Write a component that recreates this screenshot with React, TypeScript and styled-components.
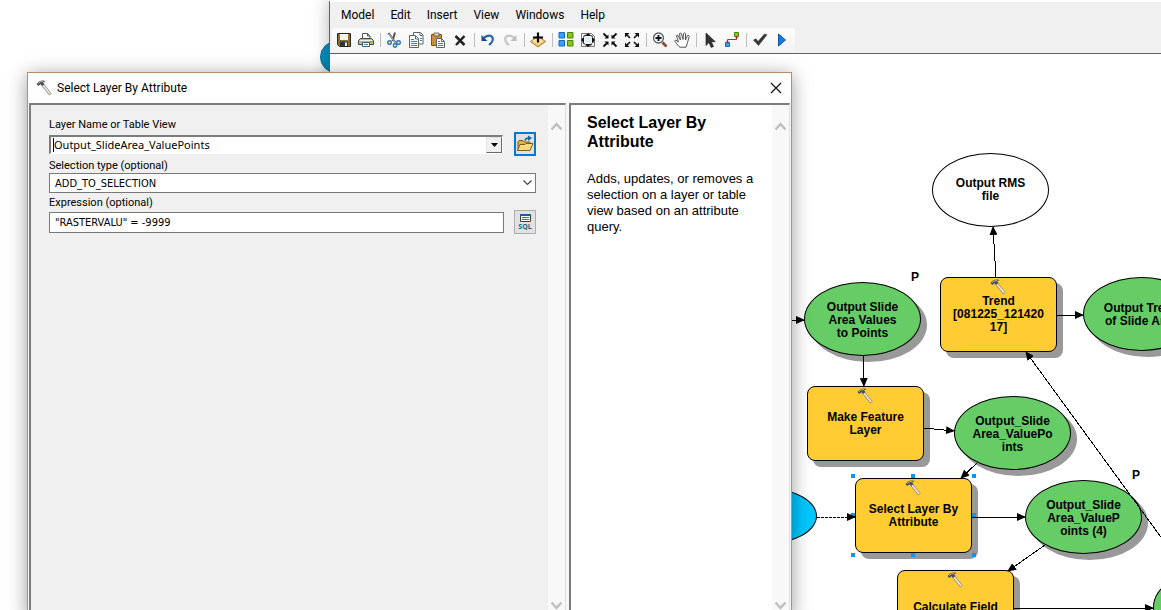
import React from "react";
import styled, { createGlobalStyle } from "styled-components";

const GlobalStyle = createGlobalStyle`
  *, *::before, *::after { box-sizing: border-box; }
  html, body { margin: 0; padding: 0; }
  body { background: #fff; color: #000; font-family: "Open Sans", "Noto Sans", sans-serif; }
  button, input, select { font: inherit; color: inherit; margin: 0; border-radius: 0; outline: none; }
`;

const arial = `"Liberation Sans", Arial, sans-serif`;
const ui = `Roboto, "Open Sans", sans-serif`;
const value = `"Noto Sans", "Open Sans", sans-serif`;
const form = `"DejaVu Sans Condensed", "Noto Sans", sans-serif`;

/* ---------- desktop and windows ---------- */

const Desktop = styled.div`
  position: relative;
  height: 100vh;
  overflow: hidden;
  background: #fff;
`;

const Bubble = styled.div`
  position: absolute;
  left: 320px;
  top: 41px;
  width: 32px;
  height: 32px;
  border-radius: 50%;
  background: #0093c4;
  border: 1px solid #08759c;
`;

const ModelWindow = styled.section`
  position: absolute;
  inset: 0 0 0 329px;
  display: flex;
  flex-direction: column;
  background: #f0f0f0;
  border-left: 1px solid #606060;
  border-top: 2px solid #fff;
  box-shadow: 0 0 16px rgba(0, 0, 0, 0.3);
`;

const MenuBar = styled.nav`
  display: flex;
  align-items: center;
  height: 26px;
  padding-left: 3px;
`;

const MenuItem = styled.button`
  padding: 0 8px;
  border: 0;
  background: none;
  font-family: ${ui};
  font-size: 12px;
  line-height: 18px;
`;

const ToolBar = styled.div`
  display: flex;
  align-items: center;
  align-self: flex-start;
  height: 24px;
  margin-left: 2px;
  padding: 0 2px 0 1px;
  border-radius: 3px;
  background: linear-gradient(#fcfcfc, #f3f3f3);
`;

const ToolButton = styled.button`
  display: flex;
  align-items: center;
  justify-content: center;
  width: 22px;
  height: 22px;
  padding: 0;
  border: 0;
  background: none;
`;

const Separator = styled.span`
  width: 1px;
  height: 14px;
  margin: 0 2px 0 3px;
  background: #bdbdbd;
`;

const Canvas = styled.div`
  position: relative;
  flex: 1;
  margin-top: 1px;
  overflow: hidden;
  border-top: 1px solid #606060;
  background: #fff;
`;

/* ---------- diagram ---------- */

type NodeKind = "tool" | "data" | "plain" | "input";

const fills: Record<NodeKind, string> = {
  tool: "#ffcc33",
  data: "#66cc66",
  plain: "#ffffff",
  input: "#00c8ff",
};

const heights: Record<NodeKind, number> = { tool: 75, data: 74, plain: 74, input: 56 };

const NodeBox = styled.div<{ $x: number; $y: number; $kind: NodeKind }>`
  position: absolute;
  left: ${(p) => p.$x}px;
  top: ${(p) => p.$y}px;
  display: flex;
  align-items: center;
  justify-content: center;
  width: ${(p) => (p.$kind === "input" ? 100 : 117)}px;
  height: ${(p) => heights[p.$kind]}px;
  padding-top: ${(p) => (p.$kind === "data" ? 2 : 0)}px;
  border: 1px solid #000;
  border-radius: ${(p) => (p.$kind === "tool" ? "8px" : "50%")};
  background: ${(p) => fills[p.$kind]};
  box-shadow: ${(p) => (p.$kind === "tool" || p.$kind === "data" ? "6px 6px 0 #999" : "none")};
  font: bold 12px/13px ${arial};
  text-align: center;
  white-space: pre;
`;

const NodeHammer = styled.span`
  position: absolute;
  left: 49px;
  top: 1px;
  height: 16px;
`;

const Param = styled.span<{ $x: number; $y: number }>`
  position: absolute;
  left: ${(p) => p.$x}px;
  top: ${(p) => p.$y}px;
  font: bold 12px/14px ${arial};
`;

const Handle = styled.span<{ $x: number; $y: number }>`
  position: absolute;
  left: ${(p) => p.$x}px;
  top: ${(p) => p.$y}px;
  width: 4px;
  height: 4px;
  background: #0a96f5;
`;

const Links = styled.svg`
  position: absolute;
  inset: 0;
  width: 100%;
  height: 100%;
  pointer-events: none;
`;

/* ---------- dialog ---------- */

const Dialog = styled.section`
  position: absolute;
  left: 27px;
  top: 72px;
  bottom: -8px;
  width: 765px;
  max-width: calc(100vw - 27px);
  display: flex;
  flex-direction: column;
  border: 1px solid #b98c63;
  background: #fff;
  box-shadow: 0 3px 18px rgba(0, 0, 0, 0.4);
`;

const TitleBar = styled.header`
  display: flex;
  align-items: center;
  height: 30px;
  padding: 0 8px;
`;

const Title = styled.h1`
  flex: 1;
  margin: 0 0 0 5px;
  font: 400 12px/16px ${ui};
`;

const CloseButton = styled.button`
  display: flex;
  align-items: center;
  justify-content: center;
  width: 14px;
  height: 14px;
  padding: 0;
  border: 0;
  background: none;
`;

const Panels = styled.div`
  flex: 1;
  display: flex;
  gap: 3px;
  min-height: 0;
  padding: 0 1px;
  background: #f6f6f6;
`;

const Panel = styled.div<{ $tone: "form" | "help" }>`
  display: flex;
  min-width: 0;
  flex: ${(p) => (p.$tone === "form" ? "1" : "0 0 221px")};
  background: ${(p) => (p.$tone === "form" ? "#f0f0f0" : "#ffffff")};
  border-top: 2px solid #7c7c7c;
  border-left: 2px solid #7c7c7c;
  border-right: 1px solid #dedede;
`;

const ScrollColumn = styled.div`
  display: flex;
  flex-direction: column;
  justify-content: space-between;
  align-items: center;
  width: 17px;
  padding: 17px 0 7px;
  background: #f8f8f8;
`;

const ScrollButton = styled.button`
  display: flex;
  padding: 0;
  border: 0;
  background: none;
`;

const Form = styled.form`
  flex: 1;
  display: flex;
  flex-direction: column;
  gap: 4px;
  min-width: 0;
  padding: 14px 12px 0 18px;
  font-family: ${form};
  font-size: 11px;
`;

const Field = styled.div`
  display: flex;
  flex-direction: column;
  gap: 1px;
`;

const Label = styled.label`
  font: 11px/12px ${ui};
`;

const Row = styled.div`
  display: flex;
  align-items: center;
  gap: 10px;
`;

const Combo = styled.div`
  flex: 1;
  display: flex;
  height: 19px;
  margin-right: 1px;
  border: 1px solid #fff;
  border-top: 2px solid #7c7c7c;
  border-left: 2px solid #7c7c7c;
  background: #fff;
`;

const Caret = styled.span`
  width: 1px;
  height: 14px;
  margin: 1px 0 0 2px;
  background: #000;
`;

const ComboInput = styled.input`
  flex: 1;
  min-width: 0;
  padding: 0;
  border: 0;
  background: none;
  font-family: ${value};
  font-size: 11px;
  line-height: 16px;
`;

const ComboArrow = styled.button`
  display: flex;
  align-items: center;
  justify-content: center;
  width: 16px;
  padding: 0;
  border: 1px solid #e6e6e6;
  border-right: 1px solid #696969;
  border-bottom: 1px solid #696969;
  background: #f0f0f0;
`;

const SelectWrap = styled.div`
  display: grid;
  align-items: center;
  height: 20px;
  > * { grid-area: 1 / 1; }
  > svg { justify-self: end; margin-right: 4px; pointer-events: none; }
`;

const Select = styled.select`
  appearance: none;
  width: 100%;
  height: 20px;
  padding: 0 20px 0 5px;
  border: 1px solid #7a7a7a;
  background: #fff;
  font-size: 11px;
`;

const TextInput = styled.input`
  flex: 1;
  min-width: 0;
  height: 21px;
  padding: 0 5px;
  border: 1px solid #7a7a7a;
  background: #fff;
  font-size: 11px;
`;

const SideButton = styled.button<{ $active?: boolean }>`
  display: flex;
  flex-direction: column;
  align-items: center;
  justify-content: center;
  gap: 1px;
  width: 22px;
  height: 24px;
  padding: 0;
  border: ${(p) => (p.$active ? "2px solid #0078d7" : "1px solid #adadad")};
  background: #e1e1e1;
`;

const SqlText = styled.span`
  color: #10688f;
  font: bold 7px/8px ${value};
`;

const Help = styled.article`
  flex: 1;
  min-width: 0;
  padding: 8px 16px 0;
  font-family: ${arial};
`;

const HelpTitle = styled.h2`
  margin: 0 0 20px;
  font: bold 16px/19px ${arial};
`;

const HelpText = styled.p`
  margin: 0;
  font-size: 13px;
  line-height: 16px;
`;

/* ---------- icons ---------- */

const Icon = ({ children }: { children: React.ReactNode }) => (
  <svg width="16" height="16" viewBox="0 0 16 16" fill="none" aria-hidden="true">
    {children}
  </svg>
);

const Hammer = () => (
  <Icon>
    <path d="M6.5 4.5 L14.5 14.5" stroke="#8b857b" strokeWidth="3" />
    <path d="M6.5 4.5 L14.2 14" stroke="#efe6d8" strokeWidth="1.8" />
    <path d="M0.5 4 L3 1.5 Q6 -0.2 10 1 L7 2.2 L8.5 4 L6 6 L4.6 4.2 L2.2 6 Z" fill="#4b4f52" />
    <path d="M2 3.6 L4 2 L7 1.4" stroke="#aeb4b8" strokeWidth="1" />
  </Icon>
);

const toolIcons: Record<string, React.ReactNode> = {
  Save: (
    <>
      <path d="M1.5 1.5h13v13h-11l-2-2z" fill="#85742f" stroke="#2c2a20" />
      <path d="M4 2h8v6H4z" fill="#f2f2ee" />
      <path d="M4 9.5h8V14H4z" fill="#33363a" />
      <path d="M9 10.5h2V14H9z" fill="#e9e9e9" />
    </>
  ),
  Print: (
    <>
      <path d="M4.5 7V1.5h5l2.5 2.5V7" fill="#fff" stroke="#555" />
      <path d="M9.5 1.5v2.5H12" stroke="#555" />
      <path d="M0.5 8.5l2-2h11l2 2v4h-15z" fill="#b9b79a" stroke="#4c4c46" />
      <path d="M2 8.5h12" stroke="#eee" />
      <path d="M12 10h2" stroke="#65c400" strokeWidth="2" />
      <path d="M4.5 10.5h7v4h-7z" fill="#fff" stroke="#555" />
      <path d="M6 12.5h4" stroke="#3b83bd" />
    </>
  ),
  Cut: (
    <>
      <path d="M2.5 1L9.5 10.5M9 0.5L6.5 9" stroke="#555" strokeWidth="2" />
      <path d="M3 2L9 10" stroke="#ddd" strokeWidth="0.8" />
      <circle cx="3.5" cy="10.5" r="1.8" stroke="#2475b0" strokeWidth="1.4" />
      <circle cx="12.5" cy="10.5" r="1.8" stroke="#2475b0" strokeWidth="1.4" />
      <circle cx="9" cy="13.5" r="1.7" stroke="#2475b0" strokeWidth="1.4" />
    </>
  ),
  Copy: (
    <>
      <path d="M5.5 0.5h7l2.5 2.5v9h-9.5z" fill="#fff" stroke="#59656e" />
      <path d="M12 1v2.5h2.5" stroke="#59656e" />
      <path d="M1.5 3.5h6l3 3v9h-9z" fill="#fff" stroke="#59656e" />
      <path d="M7.5 4v3h3" stroke="#59656e" />
      <path d="M3 7.5h3M3 9.5h6M3 11.5h6M3 13.5h6M12 6.5h2M12 8.5h2" stroke="#2b84c6" />
    </>
  ),
  Paste: (
    <>
      <path d="M1.5 2.5h10v11h-10z" fill="#d28c35" stroke="#8a4f15" />
      <path d="M4 1h5v3H4z" fill="#d9d9d9" stroke="#555" strokeWidth="0.8" />
      <path d="M6.5 6.5h5l3 3v6h-8z" fill="#fff" stroke="#59656e" />
      <path d="M11.5 7v2.5H14" stroke="#59656e" />
      <path d="M8 11.5h5M8 13.5h5M8 9.5h2" stroke="#2b84c6" />
    </>
  ),
  Delete: <path d="M3.5 4L12.5 13M12.5 4L4 13" stroke="#222" strokeWidth="2.5" />,
  Undo: (
    <>
      <path d="M4 5.5Q10 2 12.5 5.5Q14 9 9 13" stroke="#2567a4" strokeWidth="2.2" />
      <path d="M1.5 3v6h6z" fill="#174c83" />
    </>
  ),
  Redo: (
    <>
      <path d="M12 5.5Q6 2 3.5 5.5Q2 9 7 13" stroke="#c6c6c6" strokeWidth="2.2" />
      <path d="M14.5 3v6h-6z" fill="#bcbcbc" />
    </>
  ),
  "Add data": (
    <>
      <path d="M8 4L15.5 9.5 8 15 0.5 9.5z" fill="#f2c46c" stroke="#a87832" />
      <path d="M2.5 9L8 5l5.5 4L8 12.5z" fill="#ffe2a0" />
      <path d="M8 0.5v10M3 5.5h10" stroke="#000" strokeWidth="2.2" />
    </>
  ),
  "Auto layout": (
    <>
      <path d="M1 0.5h5.500v5.500H1zM1 8.5h5.500V14H1z" fill="#3aa0ff" stroke="#1768b5" />
      <path d="M9.5 0.5H15V6H9.5zM9.5 8.5H15V14H9.5z" fill="#8fc31f" stroke="#4e830d" />
    </>
  ),
  "Full extent": (
    <>
      <path d="M1.5 1.5h10l3 3v10h-13z" fill="#fff" stroke="#777" />
      <circle cx="8" cy="8" r="5.5" fill="#eef5f8" stroke="#555" strokeWidth="1.4" strokeDasharray="3 1" />
      <path d="M8 1l3 3H5zM8 15l3-3H5zM1 8l3-3v6zM15 8l-3-3v6z" fill="#111" />
      <path d="M5.5 5.5h5v5h-5z" fill="#dcebf2" />
    </>
  ),
  "Fixed zoom in": (
    <>
      <path d="M1.5 1.5L5 5M14.5 1.5L11 5M1.5 14.5L5 11M14.5 14.5L11 11" stroke="#111" strokeWidth="1.8" />
      <path d="M2.5 6.5h4v-4zM13.5 6.5h-4v-4zM2.5 9.5h4v4zM13.5 9.5h-4v4z" fill="#111" />
    </>
  ),
  "Fixed zoom out": (
    <>
      <path d="M3 3l3 3M13 3l-3 3M3 13l3-3M13 13l-3-3" stroke="#111" strokeWidth="1.6" />
      <path d="M1 1h4.5L1 5.5zM15 1h-4.5l4.5 4.5zM1 15h4.5L1 10.5zM15 15h-4.5l4.5-4.5z" fill="#111" />
    </>
  ),
  Zoom: (
    <>
      <path d="M10.5 10.5L14.5 14.5" stroke="#8b4b35" strokeWidth="2.8" />
      <circle cx="6.5" cy="6" r="5" fill="#f1f7fa" stroke="#5b6165" strokeWidth="1.3" />
      <path d="M3.5 6h6M6.5 3v6" stroke="#111" strokeWidth="1.8" />
    </>
  ),
  Pan: (
    <path
      d="M5 14.5L1 9.5Q0.5 8 2 8.2L4.5 10 2.5 4Q2.6 2.5 4 3.5L6.5 8 5.5 2Q6 0.3 7.3 1.5L9 7.5 9.5 1.5Q10.5 0 11.5 1.5L11.5 8 13.5 3.5Q15 3 15.2 4.5L13.5 10.5 12 15.2H6z"
      fill="#fff"
      stroke="#555"
    />
  ),
  Select: <path d="M4 1v12.5l3-3 2.2 5 2.3-1-2.2-4.8h4z" fill="#333" stroke="#111" strokeWidth="0.6" />,
  Connect: (
    <>
      <path d="M3.5 10V7.5h9V5" stroke="#555" />
      <path d="M1.5 10.5h4v4h-4z" fill="#3aa0ff" stroke="#1768b5" />
      <path d="M10.5 0.5h4v4h-4z" fill="#8fc31f" stroke="#4e830d" />
      <path d="M3.5 8.5v2M12.5 4.5v2" stroke="#e00000" strokeWidth="1.6" />
    </>
  ),
  Validate: <path d="M1.5 8L4 6.8 6 9.5 12.5 2 15 2.8 6.5 13.5z" fill="#333" stroke="#444" strokeWidth="0.6" />,
  Run: <path d="M4.5 2L11.5 8l-7 6z" fill="#1879dc" stroke="#0b55ad" />,
};

const toolGroups = [
  ["Save", "Print"],
  ["Cut", "Copy", "Paste", "Delete"],
  ["Undo", "Redo"],
  ["Add data"],
  ["Auto layout", "Full extent", "Fixed zoom in", "Fixed zoom out"],
  ["Zoom", "Pan"],
  ["Select", "Connect"],
  ["Validate", "Run"],
];

const Folder = () => (
  <svg width="18" height="18" viewBox="0 0 18 18" fill="none" aria-hidden="true">
    <path d="M2 15.5V6.5l1-1h4l1.5 1.5H14v3" fill="#d9b24a" stroke="#7d5c17" />
    <path d="M1.5 15.5L4 9.5h5l1-1h7l-3 7z" fill="#f6d97c" stroke="#7d5c17" />
    <path d="M9 5.5Q9.5 3 13 3" stroke="#14639e" strokeWidth="1.5" />
    <path d="M12 0.5l4 2.5-4 3z" fill="#14639e" />
  </svg>
);

const SqlIcon = () => (
  <svg width="11" height="8" viewBox="0 0 11 8" fill="none" aria-hidden="true">
    <path d="M0.5 0.5h10v7h-10z" fill="#fff" stroke="#333f48" />
    <path d="M0 1h11" stroke="#1b5f98" strokeWidth="2" />
    <path d="M2 3.5h7M2 5.5h7" stroke="#1d7cc9" />
  </svg>
);

const Chevron = ({ up }: { up?: boolean }) => (
  <svg width="11" height="9" viewBox="0 0 11 9" fill="none" aria-hidden="true">
    <path d={up ? "M0.5 7.5L5.5 2l5 5.5" : "M0.5 1.5L5.5 7l5-5.5"} stroke="#bfbfbf" strokeWidth="2.5" />
  </svg>
);

const Scroll = () => (
  <ScrollColumn>
    <ScrollButton type="button" aria-label="Scroll up"><Chevron up /></ScrollButton>
    <ScrollButton type="button" aria-label="Scroll down"><Chevron /></ScrollButton>
  </ScrollColumn>
);

/* ---------- diagram data, in canvas coordinates ---------- */

const nodes: { x: number; y: number; kind: NodeKind; text: string }[] = [
  { x: 602, y: 99, kind: "plain", text: "Output RMS\nfile" },
  { x: 474, y: 228, kind: "data", text: "Output Slide\nArea Values\nto Points" },
  { x: 610, y: 223, kind: "tool", text: "Trend\n[081225_121420\n17]" },
  { x: 753, y: 223, kind: "data", text: "Output Trend\nof Slide Area" },
  { x: 477, y: 332, kind: "tool", text: "Make Feature\nLayer" },
  { x: 624, y: 342, kind: "data", text: "Output_Slide\nArea_ValuePo\nints" },
  { x: 387, y: 434, kind: "input", text: "" },
  { x: 525, y: 424, kind: "tool", text: "Select Layer By\nAttribute" },
  { x: 695, y: 426, kind: "data", text: "Output_Slide\nArea_ValueP\noints (4)" },
  { x: 567, y: 516, kind: "tool", text: "Calculate Field" },
  { x: 823, y: 516, kind: "data", text: "" },
];

const links: [number, number, number, number][] = [
  [440, 266, 474, 266],
  [533, 302, 534, 332],
  [666, 223, 663, 173],
  [727, 261, 753, 261],
  [594, 374, 624, 377],
  [647, 409, 631, 424],
  [642, 463, 695, 463],
  [715, 491, 678, 517],
  [684, 554, 823, 554],
  [833, 486, 696, 298],
];

const handles = [
  [521, 420], [581, 420], [642, 420],
  [521, 459], [642, 459],
  [521, 499], [581, 499], [642, 499],
];

export default function App() {
  return (
    <>
      <GlobalStyle />
      <Desktop>
        <Bubble />
        <ModelWindow aria-label="Model">
          <MenuBar>
            {["Model", "Edit", "Insert", "View", "Windows", "Help"].map((m) => (
              <MenuItem key={m} type="button">{m}</MenuItem>
            ))}
          </MenuBar>
          <ToolBar role="toolbar">
            {toolGroups.map((group, i) => (
              <React.Fragment key={group[0]}>
                {i > 0 && <Separator />}
                {group.map((name) => (
                  <ToolButton key={name} type="button" aria-label={name}>
                    <Icon>{toolIcons[name]}</Icon>
                  </ToolButton>
                ))}
              </React.Fragment>
            ))}
          </ToolBar>
          <Canvas>
            {nodes.map((n) => (
              <NodeBox key={`${n.x}-${n.y}`} $x={n.x} $y={n.y} $kind={n.kind}>
                {n.kind === "tool" && <NodeHammer><Hammer /></NodeHammer>}
                {n.text}
              </NodeBox>
            ))}
            {handles.map(([x, y]) => <Handle key={`${x}-${y}`} $x={x} $y={y} />)}
            <Links>
              <defs>
                <marker id="head" markerUnits="userSpaceOnUse" markerWidth="9" markerHeight="8" refX="8" refY="4" orient="auto">
                  <path d="M0 0L9 4 0 8z" fill="#000" />
                </marker>
              </defs>
              <g stroke="#000" strokeWidth="1" shapeRendering="crispEdges">
                {links.map(([x1, y1, x2, y2]) => (
                  <line key={`${x1}-${y1}`} x1={x1} y1={y1} x2={x2} y2={y2} markerEnd="url(#head)" />
                ))}
                <line x1="487" y1="463" x2="525" y2="463" strokeDasharray="3 1" markerEnd="url(#head)" />
              </g>
            </Links>
            <Param $x={581} $y={216}>P</Param>
            <Param $x={802} $y={414}>P</Param>
          </Canvas>
        </ModelWindow>

        <Dialog role="dialog" aria-labelledby="dialog-title">
          <TitleBar>
            <Hammer />
            <Title id="dialog-title">Select Layer By Attribute</Title>
            <CloseButton type="button" aria-label="Close">
              <svg width="12" height="12" viewBox="0 0 12 12" aria-hidden="true">
                <path d="M1 1L11 11M11 1L1 11" stroke="#111" strokeWidth="1.2" />
              </svg>
            </CloseButton>
          </TitleBar>
          <Panels>
            <Panel $tone="form">
              <Form onSubmit={(e) => e.preventDefault()}>
                <Field>
                  <Label htmlFor="layer">Layer Name or Table View</Label>
                  <Row>
                    <Combo>
                      <Caret />
                      <ComboInput id="layer" defaultValue="Output_SlideArea_ValuePoints" />
                      <ComboArrow type="button" aria-label="Show layers">
                        <svg width="7" height="4" viewBox="0 0 7 4" aria-hidden="true"><path d="M0 0h7L3.5 4z" /></svg>
                      </ComboArrow>
                    </Combo>
                    <SideButton type="button" $active aria-label="Browse"><Folder /></SideButton>
                  </Row>
                </Field>
                <Field>
                  <Label htmlFor="selection">Selection type (optional)</Label>
                  <SelectWrap>
                    <Select id="selection" defaultValue="ADD_TO_SELECTION">
                      <option>ADD_TO_SELECTION</option>
                    </Select>
                    <svg width="9" height="6" viewBox="0 0 9 6" fill="none" aria-hidden="true">
                      <path d="M0.5 0.5l4 4 4-4" stroke="#444" strokeWidth="1.2" />
                    </svg>
                  </SelectWrap>
                </Field>
                <Field>
                  <Label htmlFor="expression">Expression (optional)</Label>
                  <Row>
                    <TextInput id="expression" defaultValue={'"RASTERVALU" = -9999'} />
                    <SideButton type="button">
                      <SqlIcon />
                      <SqlText>SQL</SqlText>
                    </SideButton>
                  </Row>
                </Field>
              </Form>
              <Scroll />
            </Panel>
            <Panel $tone="help">
              <Help>
                <HelpTitle>Select Layer By Attribute</HelpTitle>
                <HelpText>Adds, updates, or removes a selection on a layer or table view based on an attribute query.</HelpText>
              </Help>
              <Scroll />
            </Panel>
          </Panels>
        </Dialog>
      </Desktop>
    </>
  );
}
